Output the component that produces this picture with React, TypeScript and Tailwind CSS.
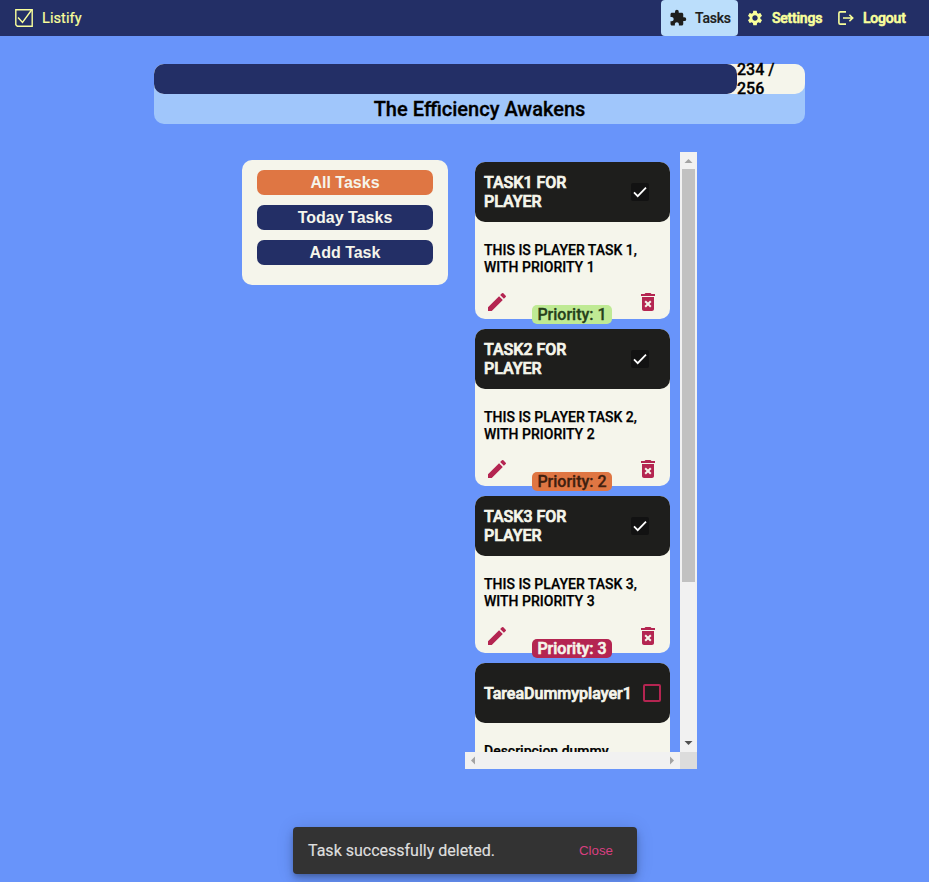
import { MdExtension, MdSettings, MdEdit, MdDeleteForever } from "react-icons/md";

type Task = { title: string[]; text: string[]; done: boolean; priority: number };

const tasks: Task[] = [1, 2, 3].map((n) => ({
  title: [`TASK${n} FOR`, "PLAYER"],
  text: [`THIS IS PLAYER TASK ${n},`, `WITH PRIORITY ${n}`],
  done: true,
  priority: n,
}));
tasks.push({ title: ["TareaDummyplayer1"], text: ["Descripcion dummy"], done: false, priority: 1 });

const priorityStyles: Record<number, string> = {
  1: "bg-[#bfea94] text-[#26401a]",
  2: "bg-[#df7643] text-[#40200f]",
  3: "bg-[#b42551] text-[#f5f5eb] [-webkit-text-stroke:0.6px]",
};

function LogoIcon() {
  return (
    <svg className="size-[18px]" viewBox="0 0 18 18" fill="none" stroke="#f9ff9b" strokeWidth="1.4">
      <path d="M.8.8h16.4v16.4H2.3L.8 15.7z" />
      <path d="M3 8.5l4.5 5L16.6 1" />
    </svg>
  );
}

function LogoutIcon() {
  return (
    <svg className="h-[14px] w-4" viewBox="0 0 16 14" fill="none" stroke="currentColor" strokeWidth="1.6">
      <path d="M8 .9H2.3Q.9.9.9 2.3v9.4q0 1.4 1.4 1.4H8M5 7h9.5M11.4 3.8L14.7 7l-3.3 3.2" />
    </svg>
  );
}

function Header() {
  return (
    <header className="flex h-9 items-center bg-[#232f66] text-[#f9ff9b]">
      <div className="flex items-center gap-[9px] pl-[15px] text-[14.5px]">
        <LogoIcon />
        <span className="pt-px tracking-[0.1px] [-webkit-text-stroke:0.2px]">Listify</span>
      </div>
      <nav className="ml-auto flex h-9 items-center pr-6 text-[14px] font-medium [-webkit-text-stroke:0.6px]">
        <a className="flex h-9 w-[77px] items-center gap-2 rounded bg-[#bbdefb] pl-2 text-[#1e1e1c] [-webkit-text-stroke:0.2px]">
          <MdExtension className="size-[18px]" />
          <span className="tracking-[-0.2px]">Tasks</span>
        </a>
        <a className="ml-2 flex items-center gap-2">
          <MdSettings className="size-[18px]" strokeWidth="0" />
          <span className="w-[50px] tracking-[-0.2px]">Settings</span>
        </a>
        <a className="ml-[16px] flex items-center gap-[9px]">
          <LogoutIcon />
          <span className="w-[42px] tracking-[-0.2px]">Logout</span>
        </a>
      </nav>
    </header>
  );
}

function TaskCard({ task }: { task: Task }) {
  return (
    <article className="relative h-[157px] w-[195px] shrink-0 rounded-[10px] bg-[#f5f5eb]">
      <div className="flex h-[60px] items-center justify-between rounded-[10px] bg-[#1e1e1c] pl-[9px]">
        <h2 className="text-[16px] leading-[19px] font-medium text-[#f5f5eb] [-webkit-text-stroke:0.7px]">
          {task.title.map((line) => (
            <span key={line} className="block whitespace-nowrap">{line}</span>
          ))}
        </h2>
        {task.done ? (
          <span className="mr-[21px] flex size-[18px] items-center justify-center rounded-xs bg-[#121212]">
            <svg className="h-3 w-[14px]" viewBox="0 0 14 12" fill="none" stroke="#fff" strokeWidth="1.8">
              <path d="M1 6.4l3.7 3.7L13 1.6" />
            </svg>
          </span>
        ) : (
          <span className="mr-[9px] size-[18px] rounded-xs border-2 border-[#b42551]" />
        )}
      </div>
      <p className="pt-5 pl-[9px] text-[14px] leading-[17px] font-medium text-black [-webkit-text-stroke:0.25px]">
        {task.text.map((line) => (
          <span key={line} className="block whitespace-nowrap">{line}</span>
        ))}
      </p>
      <div className="flex justify-between px-[9px] pt-[14px] text-[#b42551]">
        <MdEdit className="ml-[0.5px] size-6" />
        <MdDeleteForever className="mr-[1px] size-6" />
      </div>
      <span
        className={`absolute top-[143px] left-[57px] flex h-[19px] w-20 items-center justify-center rounded-[5px] text-[16px] leading-[19px] font-medium whitespace-nowrap [-webkit-text-stroke:0.3px] ${priorityStyles[task.priority]}`}
      >
        Priority: {task.priority}
      </span>
    </article>
  );
}

function Arrow({ d, color }: { d: string; color: string }) {
  return (
    <svg className="size-[17px]" viewBox="0 0 17 17" fill={color}>
      <path d={d} />
    </svg>
  );
}

export default function App() {
  return (
    <div className="h-[882px] w-[929px] overflow-hidden bg-[#6894fa] font-['Roboto','Liberation_Sans',sans-serif]">
      <Header />
      <section className="mt-7 ml-[154px] h-[60px] w-[651px] rounded-[10px] bg-[#a0c6fb] text-black [-webkit-text-stroke:0.3px]">
        <div className="flex h-[30px] items-center rounded-[10px] bg-[#f5f5eb]">
          <div className="h-[30px] w-[583px] rounded-[10px] bg-[#232f66]" />
          <span className="w-12 text-[16px] leading-[19px] font-medium">234 / 256</span>
        </div>
        <h1 className="text-center text-[20px] leading-[30px] font-medium">The Efficiency Awakens</h1>
      </section>

      <main className="mt-7 flex h-[617px] pl-[242px]">
        <aside className="mt-2 flex h-[125px] w-[206px] flex-col gap-[10px] rounded-[10px] bg-[#f5f5eb] px-[15px] pt-[10px] font-['Liberation_Sans',Arial,sans-serif] text-[16px] leading-[25px] font-bold text-[#f5f5eb]">
          <button className="h-[25px] rounded-[7px] bg-[#df7643]">All Tasks</button>
          <button className="h-[25px] rounded-[7px] bg-[#232f66]">Today Tasks</button>
          <button className="h-[25px] rounded-[7px] bg-[#232f66]">Add Task</button>
        </aside>
        <section className="ml-[17px] grid h-[617px] w-[232px] grid-cols-[215px_17px] grid-rows-[600px_17px]">
          <div className="flex flex-col gap-[10px] overflow-hidden pt-[10px] pl-[10px]">
            {tasks.map((task) => (
              <TaskCard key={task.title[0]} task={task} />
            ))}
          </div>
          <div className="flex flex-col items-center bg-[#f1f1f1]">
            <Arrow d="M4.5 11l4-4 4 4z" color="#a3a3a3" />
            <div className="h-[413px] w-[13px] bg-[#c1c1c1]" />
            <div className="mt-auto">
              <Arrow d="M4.5 6h8l-4 4z" color="#505050" />
            </div>
          </div>
          <div className="flex justify-between bg-[#f1f1f1]">
            <Arrow d="M10 4.5v8l-4-4z" color="#a3a3a3" />
            <Arrow d="M7 4.5v8l4-4z" color="#a3a3a3" />
          </div>
          <div className="bg-[#dcdcdc]" />
        </section>
      </main>

      <div className="mt-[58px] ml-[293px] flex h-[47px] w-[344px] items-center justify-between rounded bg-[#333] pr-6 pl-[15px] shadow-[0_3px_5px_-1px_rgba(0,0,0,0.2),0_6px_10px_0_rgba(0,0,0,0.14),0_1px_18px_0_rgba(0,0,0,0.12)]">
        <span className="text-[16px] text-[#dedede] [-webkit-text-stroke:0.2px]">Task successfully deleted.</span>
        <button className="font-['Liberation_Sans',Arial,sans-serif] text-[13.33px] text-[#d83f80]">Close</button>
      </div>
    </div>
  );
}
